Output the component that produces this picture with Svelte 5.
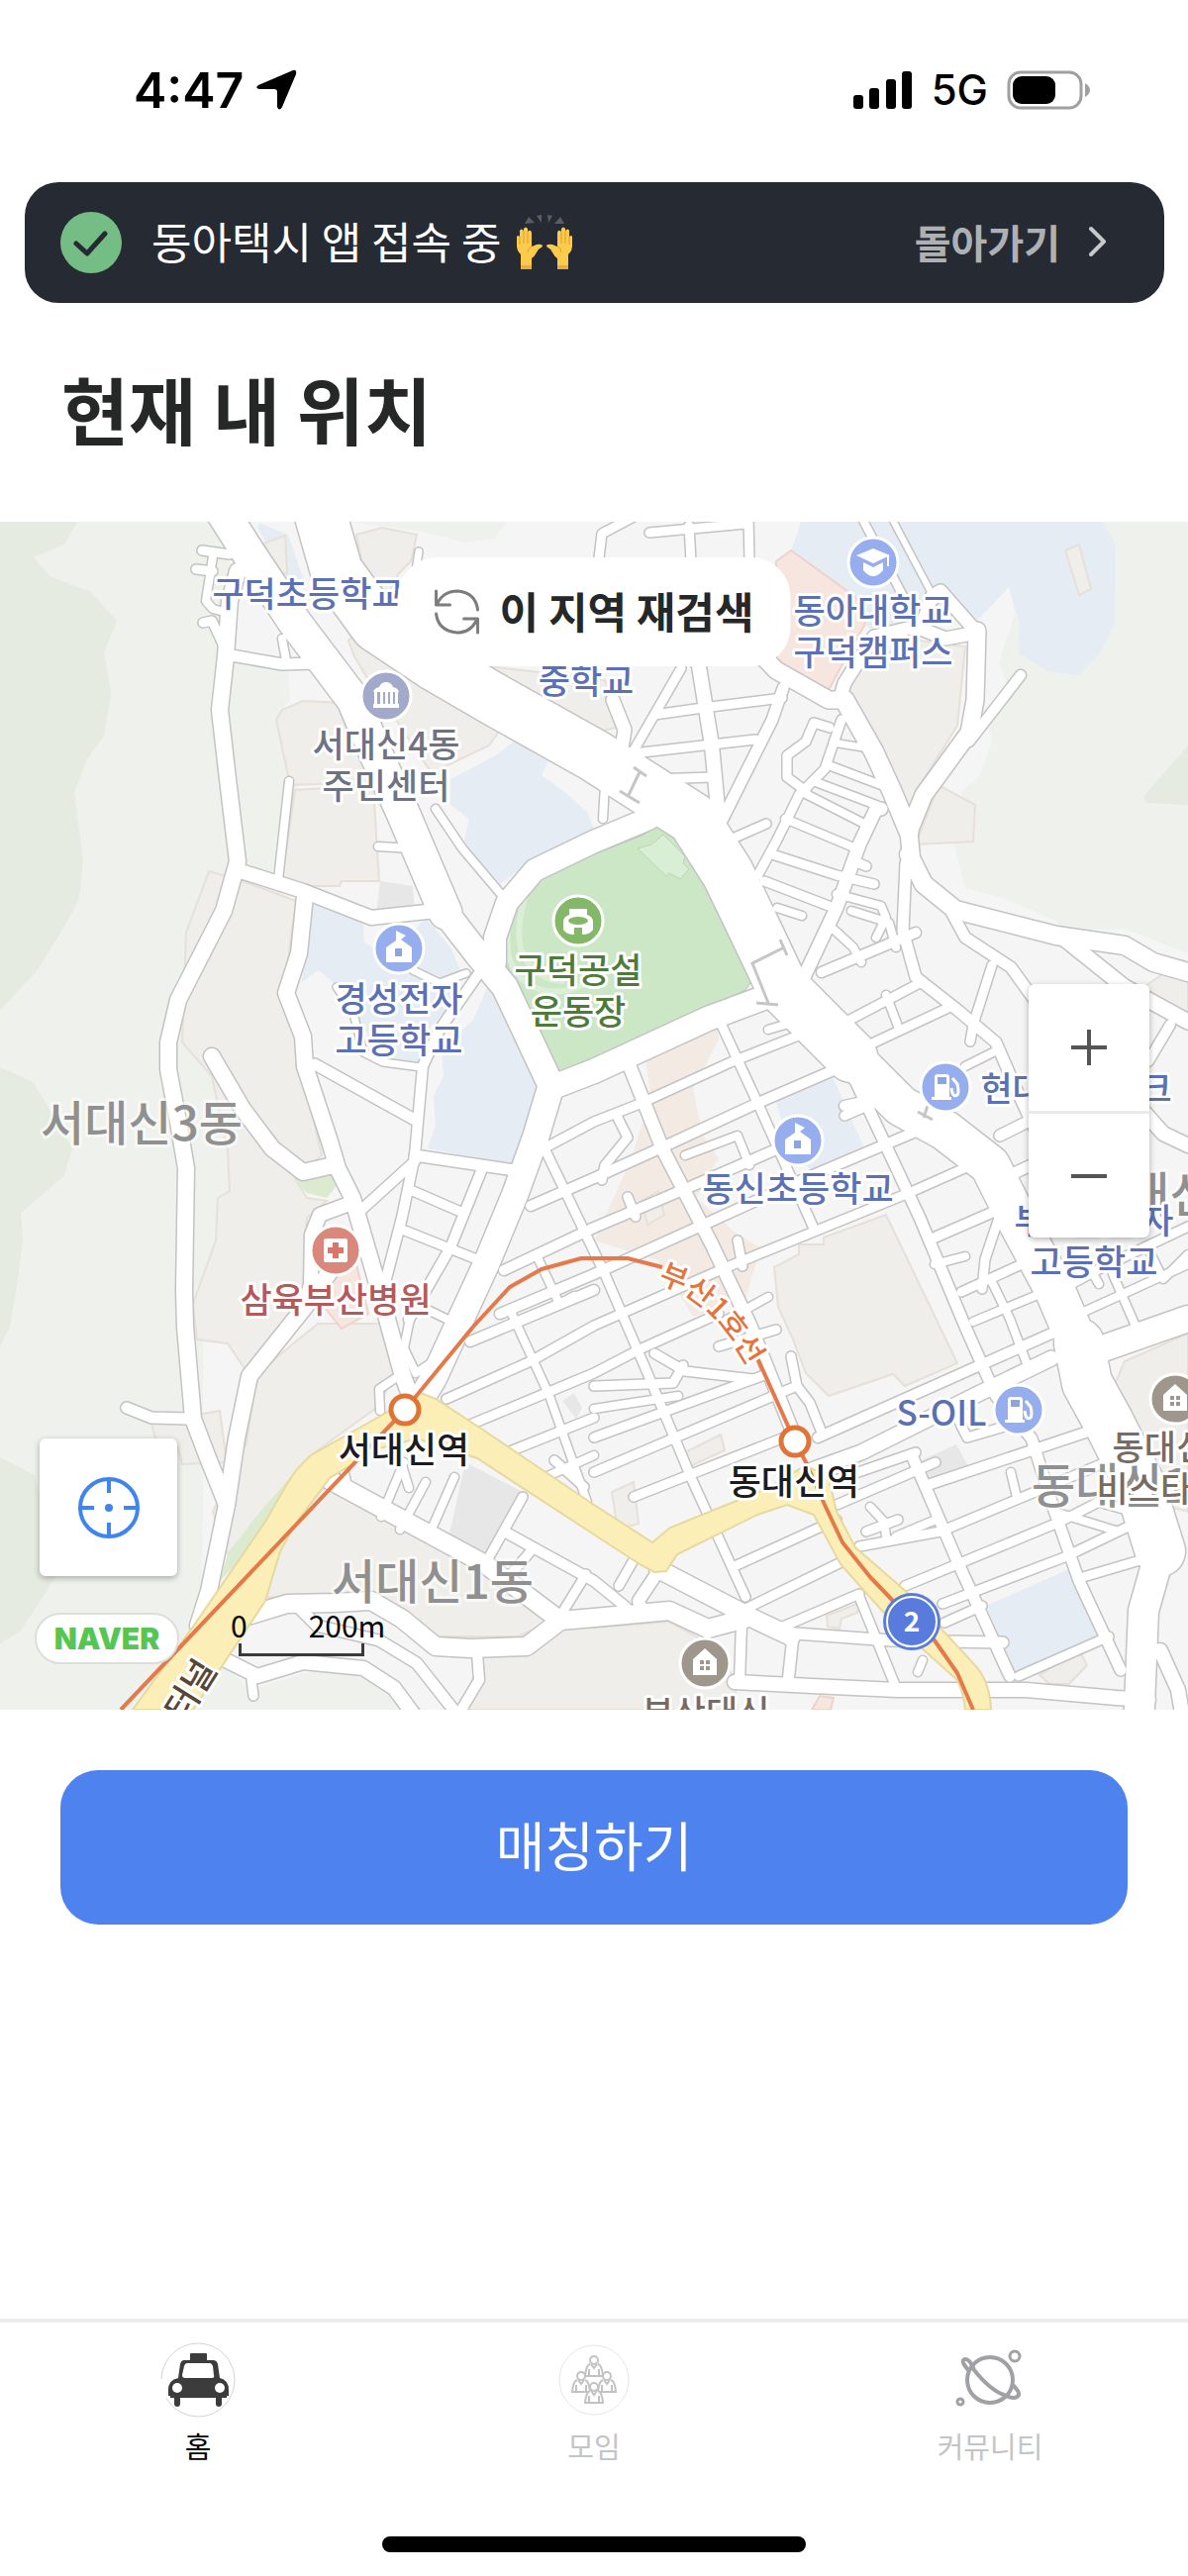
<script lang="ts">
  type Kind = "school" | "univ" | "gas" | "office" | "stadium" | "hospital" | "apartment";

  interface Label {
    x: number;
    y: number;
    lines: string[];
    tone: string;
  }

  interface Pin {
    x: number;
    y: number;
    kind: Kind;
  }

  // Closed areas under the roads: [class, points]
  const areas: [string, string][] = [
    ["hill", "0,0 212,0 240,60 228,130 290,140 293,180 280,195 300,268 290,380 240,360 211,353 188,415 205,420 184,526 214,560 230,636 232,676 220,683 218,726 195,790 205,830 205,1000 203,1110 250,1180 320,1160 370,1165 415,1200 0,1200"],
    ["hill", "1113,0 1200,0 1200,436 1136,411 1071,413 1067,403 1013,380 975,370 964,326 971,273 990,256 1002,223 998,193 1017,163 1009,143 1025,93 1021,66"],
    ["hill", "352,0 512,0 500,17 470,21 425,10"],
    ["forest", "0,0 78,0 65,23 34,36 50,55 92,71 118,100 105,133 112,173 105,216 88,240 75,273 84,343 80,380 70,400 38,453 0,493"],
    ["forest", "0,551 33,566 46,586 73,633 65,660 21,698 23,723 19,760 10,813 0,833"],
    ["forest", "0,945 35,963 60,1060 21,1120 0,1133"],
    ["forest", "1200,226 1155,278 1158,284 1200,286"],
    ["block", "360,13 386,6 421,13 415,40 402,53 390,80 369,60"],
    ["block", "306,181 346,183 385,262 318,265 293,266 279,200 285,190"],
    ["block", "298,271 377,266 383,363 345,363 343,368 316,368 285,360"],
    ["block", "363,110 410,140 503,200 505,210 494,226 452,246 440,260 400,200 368,153 358,136 352,120"],
    ["block", "494,146 600,213 631,206 611,160"],
    ["block", "211,353 245,363 299,383 291,443 283,476 299,526 325,640 298,663 310,683 330,686 310,703 306,776 295,803 250,860 230,830 199,826 195,790 218,726 220,683 232,676 230,636 214,560 184,526 188,415"],
    ["block", "321,810 387,810 398,860 383,893 314,943 230,1043 215,1000 249,930 260,860"],
    ["block", "153,910 222,898 229,950 184,952 178,930 158,930"],
    ["block", "329,973 494,1056 559,1110 524,1126 440,1126 383,1093 268,1086 283,1040 298,1010"],
    ["block", "486,1143 559,1110 600,1117 676,1111 711,1130 741,1166 745,1200 467,1200"],
    ["block", "832,723 895,700 967,850 914,873 902,861 837,883 814,860 801,826 786,793 782,753 807,740 807,730 832,730"],
    ["block", "868,143 929,120 975,126 967,206 925,273 914,296 853,186"],
    ["block", "948,266 985,286 983,323 925,326"],
    ["block", "1200,820 1136,848 1122,880 1143,926 1174,993 1200,1000"],
    ["block", "1140,480 1185,450 1200,455 1200,500"],
    ["salmon", "652,541 724,508 726,523 700,573 710,620 726,643 703,683 745,720 768,733 753,786 700,803 665,746 600,726 638,643 657,580"],
    ["school", "809,0 1113,0 1127,23 1126,103 1113,130 1090,155 1059,151 1029,133 1030,103 1019,66 987,100 960,100 883,113 854,80 799,30"],
    ["school", "260,6 262,1 291,13 306,56 300,70 287,53"],
    ["school", "528,215 555,238 547,256 574,276 593,293 600,310 551,333 505,366 467,330 474,300 455,286 455,260 501,236"],
    ["school", "314,386 367,406 368,425 395,440 430,400 455,430 466,455 450,465 465,480 432,513 425,548 383,543 365,505 342,470 322,453 305,465"],
    ["school", "494,466 547,576 528,651 432,633 440,610 438,580 448,560 446,533 478,503"],
    ["school", "784,586 841,561 874,635 822,656 800,640"],
    ["school", "996,1095 1080,1058 1113,1123 1025,1162"],
    ["hospital", "784,40 799,29 864,76 874,103 853,140 837,170 784,143"],
    ["hospital", "325,755 360,750 372,800 345,815 325,790"],
    ["hospital", "820,1200 828,1186 842,1188 839,1200"],
    ["lawn", "298,665 337,655 339,672 330,683 310,678"],
    ["lawn", "222,1070 230,1043 260,1003 291,968 318,943 314,960 270,1020"],
    ["built", "384,363 417,368 419,394 380,396"],
    ["built", "470,950 528,980 498,1048 450,1040"],
    ["built", "926,950 966,932 980,958 938,976"],
    ["built", "568,888 580,880 588,895 582,906"],
    ["block", "692,940 728,922 732,938 695,955"],
    ["block", "618,980 640,970 645,1012 624,1018"],
    ["block", "835,1105 868,1092 866,1102 850,1108 848,1118 836,1116"],
    ["block", "1050,1165 1090,1140 1098,1155 1080,1174 1060,1174"],
    ["block", "648,686 665,676 671,700 654,710"],
    ["block", "1076,29 1090,23 1102,68 1090,74"],
    ["block", "266,22 288,14 290,52 282,53"],
    ["park", "600,336 650,316 663,308 673,307 696,323 720,370 742,413 760,463 753,473 700,498 566,560 513,453 513,420 526,370 547,353"],
    ["parkBuilt", "644,330 658,326 670,316 692,338 690,345 696,351 687,361 676,355 673,358"],
  ];

  // Centre lines: [width, points]
  const roads: [number, string][] = [
    [52, "320,-20 340,50 380,105 440,145 500,180 600,236 700,300 735,355 764,415 790,470 860,540"],
    [40, "850,530 910,590 955,615 1000,650 1030,710 1065,775 1095,845"],
    [50, "1090,830 1098,870 1120,910 1150,970 1172,1040"],
    [30, "1172,1040 1155,1100 1150,1220"],
    [14, "1172,1140 1190,1180 1195,1210"],
    [26, "1100,840 1200,805"],
    [33, "215,-25 250,30 298,102 357,180 380,235 407,294 450,395"],
    [26, "450,395 485,440 510,470 556,568"],
    [22, "500,445 500,420 512,385 540,352 600,323 655,300"],
    [24, "556,572 600,555 715,502 790,474"],
    [26, "556,572 541,622 520,680 491,750 438,865 420,895"],
    [16, "240,50 232,80 228,136 222,190 230,260 240,343 226,393 180,483 170,526 170,553 180,606 188,653 186,776 187,813 195,906 209,943 229,993"],
    [16, "335,755 308,793 252,863 239,926 229,993 211,1080 200,1115"],
    [14, "240,352 306,373 375,400 440,393"],
    [16, "308,378 302,436 289,476 306,520 308,550 333,626 341,653 356,683 383,776 406,860 415,885"],
    [16, "214,540 245,593 275,633 306,657 337,650"],
    [14, "350,690 323,700 315,720 314,770 308,793"],
    [11, "318,548 417,603"],
    [10, "486,453 444,513 427,550 419,640 406,703 387,776 402,850"],
    [11, "419,640 526,656"],
    [10, "419,646 365,695"],
    [10, "486,656 455,733 413,806"],
    [9, "417,676 463,696"],
    [9, "409,716 494,750"],
    [7, "417,453 444,466 471,456"],
    [7, "340,470 356,493 367,536 387,546 425,551"],
    [8, "432,796 467,813"],
    [8, "415,800 408,835 420,860 435,850 465,800"],
    [8, "404,862 383,876 384,898"],
    [11, "128,895 153,905 191,906"],
    [8, "292,262 281,362"],
    [8, "382,328 415,330"],
    [8, "440,290 467,330 505,375"],
    [9, "204,29 232,33"],
    [9, "198,48 215,50"],
    [8, "215,35 208,80 215,88 230,92"],
    [9, "205,102 214,100 228,130"],
    [11, "234,135 285,144 318,143"],
    [8, "285,118 289,140"],
    [7, "423,30 420,50"],
    [9, "555,630 600,606 646,588 738,546 814,516"],
    [10, "536,691 600,663 673,630 768,586 849,551"],
    [10, "509,756 600,713 692,674 784,634"],
    [10, "505,800 600,760 715,708 814,663 944,608"],
    [10, "475,828 600,776"],
    [9, "451,886 536,848 600,812 734,753 918,678 990,646"],
    [9, "475,912 600,860 646,836 726,800"],
    [9, "500,945 600,905"],
    [8, "551,965 600,943"],
    [9, "661,840 692,858 761,866"],
    [9, "600,873 680,870 690,852"],
    [8, "600,896 685,883"],
    [9, "600,925 772,862"],
    [9, "600,960 800,875"],
    [9, "640,985 792,925"],
    [8, "692,640 745,620 757,650"],
    [13, "634,545 669,633 719,730 757,810 807,935"],
    [9, "725,500 768,593 823,716"],
    [9, "550,633 611,760 654,860 700,970 753,1086"],
    [8, "543,743 565,790 580,782"],
    [8, "517,800 555,883 593,990"],
    [9, "560,948 590,975"],
    [11, "860,556 890,620 929,703 975,813 1006,883 1042,926 1063,993 1090,1070 1132,1160"],
    [11, "921,943 967,1050 1020,1166"],
    [9, "868,1086 906,1180"],
    [9, "623,600 634,622 611,650 608,665"],
    [9, "634,682 642,702"],
    [9, "745,726 750,752"],
    [8, "734,806 776,783"],
    [8, "776,513 803,505"],
    [9, "726,833 784,816"],
    [9, "799,843 805,873 818,890 830,920"],
    [15, "820,958 870,940 990,880 1062,845"],
    [10, "826,925 990,852 1080,812"],
    [10, "853,590 898,580"],
    [9, "853,600 900,580"],
    [10, "830,455 925,415"],
    [9, "833,500 849,508 929,466"],
    [9, "883,526 960,490"],
    [8, "895,478 908,512"],
    [9, "1002,448 983,508 980,525"],
    [8, "975,550 1009,533"],
    [10, "944,723 1006,696"],
    [9, "1010,700 995,745 992,775"],
    [9, "971,778 1032,750"],
    [8, "983,808 1060,776"],
    [8, "1003,770 1020,805 1040,858"],
    [8, "944,750 975,742"],
    [8, "1097,797 1200,750"],
    [9, "1067,778 1110,755 1200,712"],
    [8, "1124,760 1146,810"],
    [8, "1090,735 1110,770"],
    [8, "1160,735 1175,765 1200,740"],
    [10, "1182,508 1160,545"],
    [14, "1150,590 1175,618 1200,630"],
    [11, "1010,620 1080,585"],
    [11, "1020,660 1080,632"],
    [18, "918,336 933,366 965,392 1067,418 1136,428 1165,445 1200,455"],
    [11, "956,385 975,420 1021,450 1050,490"],
    [15, "1071,418 1136,470 1200,505"],
    [17, "987,110 985,180 979,213 933,276 918,313 921,345"],
    [10, "1031,155 979,222"],
    [13, "933,100 941,76 950,70 987,112 955,118 925,106 883,116 853,163 848,180"],
    [8, "870,-5 920,90"],
    [6, "900,-5 945,80"],
    [19, "853,180 883,233 900,270 918,313"],
    [17, "750,115 784,150 837,180 853,180"],
    [9, "850,200 833,250 807,276 793,305 784,323 765,358"],
    [9, "838,208 822,203 814,222 795,236 795,258 814,272"],
    [13, "890,290 885,290 868,326 845,390 812,460"],
    [7, "841,223 872,228"],
    [8, "837,246 890,266"],
    [8, "824,263 885,286"],
    [8, "814,275 873,305"],
    [8, "793,300 860,328"],
    [9, "780,336 845,357 883,366"],
    [9, "772,363 837,388"],
    [9, "868,345 875,348"],
    [8, "845,376 890,388 895,400 885,420"],
    [8, "785,390 810,398"],
    [14, "705,140 719,226 726,300"],
    [9, "688,148 635,240"],
    [9, "661,195 710,188 790,178"],
    [9, "640,234 763,220"],
    [9, "660,260 719,258"],
    [11, "791,168 780,200 730,300"],
    [13, "619,180 631,210 627,235"],
    [9, "656,11 753,2"],
    [9, "696,4 698,40"],
    [9, "756,-5 757,40"],
    [9, "640,-5 608,12 604,45"],
    [8, "611,266 609,300"],
    [9, "740,320 774,305"],
    [11, "915,345 912,413 925,460 967,493 1006,526 1025,570 1051,626"],
    [8, "838,408 862,430 870,445"],
    [8, "860,393 898,405 905,430"],
    [18, "333,968 490,1053 566,1110"],
    [18, "250,1105 290,1093 337,1092 375,1090 406,1108 440,1136 475,1138 532,1136 566,1110 600,1107 676,1100 715,1118 753,1108"],
    [14, "228,1150 260,1166 306,1152 367,1158 398,1178 418,1205"],
    [9, "254,1170 256,1186"],
    [11, "300,1095 320,1115 383,1130 421,1153 462,1205"],
    [10, "482,1143 484,1170 463,1205"],
    [9, "528,985 490,1053"],
    [10, "513,1022 600,1070 632,1096"],
    [9, "536,1040 510,1070"],
    [9, "592,1063 563,1110"],
    [8, "345,945 352,980"],
    [8, "408,950 385,1005"],
    [8, "430,970 404,1018"],
    [8, "459,965 438,1013"],
    [8, "405,950 413,976"],
    [12, "665,1060 645,1090 650,1105"],
    [9, "645,1040 625,1075"],
    [18, "665,1058 765,1110 799,1126"],
    [11, "790,1122 900,1130 1013,1132"],
    [14, "742,1172 820,1176 906,1180 1036,1180 1128,1188 1160,1190"],
    [10, "749,1113 747,1172"],
    [11, "801,1126 796,1172"],
    [9, "742,1055 845,1008"],
    [9, "753,1098 862,1045"],
    [9, "791,1116 868,1083"],
    [9, "875,1020 907,1008"],
    [9, "868,1035 950,1020 1117,950"],
    [9, "914,1075 1071,1010 1110,990 1145,1000"],
    [9, "952,1093 1075,1046 1150,1010"],
    [9, "954,1112 992,1095"],
    [9, "1094,1066 1165,1045"],
    [9, "1029,1166 1120,1126"],
    [10, "937,973 1117,913"],
    [9, "838,970 925,940"],
    [9, "845,993 945,950"],
    [8, "879,995 893,1010 895,1025"],
    [8, "905,1025 945,1008"],
    [8, "927,1162 932,1150"],
    [8, "1021,960 1027,985"],
    [9, "967,905 977,925 1045,905"],
    [8, "1045,935 1065,1000 1130,1020"],
  ];

  const pins: Pin[] = [
    { x: 390, y: 176, kind: "office" },
    { x: 882, y: 41, kind: "univ" },
    { x: 403, y: 431, kind: "school" },
    { x: 584, y: 403, kind: "stadium" },
    { x: 955, y: 571, kind: "gas" },
    { x: 806, y: 625, kind: "school" },
    { x: 339, y: 736, kind: "hospital" },
    { x: 1029, y: 897, kind: "gas" },
    { x: 1187, y: 886, kind: "apartment" },
    { x: 712, y: 1153, kind: "apartment" },
  ];

  const districts: Label[] = [
    { x: 143, y: 625, lines: ["서대신3동"], tone: "district" },
    { x: 437, y: 1088, lines: ["서대신1동"], tone: "district" },
    { x: 1195, y: 697, lines: ["동대신2동"], tone: "district" },
    { x: 1144, y: 991, lines: ["동대신1동"], tone: "district" },
  ];

  const labels: Label[] = [
    { x: 311, y: 86, lines: ["구덕초등학교"], tone: "blue" },
    { x: 592, y: 174, lines: ["중학교"], tone: "blue" },
    { x: 390, y: 238, lines: ["서대신4동", "주민센터"], tone: "slate" },
    { x: 882, y: 103, lines: ["동아대학교", "구덕캠퍼스"], tone: "blue" },
    { x: 403, y: 495, lines: ["경성전자", "고등학교"], tone: "blue" },
    { x: 584, y: 466, lines: ["구덕공설", "운동장"], tone: "green" },
    { x: 1087, y: 586, lines: ["현대오일뱅크"], tone: "blue" },
    { x: 806, y: 687, lines: ["동신초등학교"], tone: "blue" },
    { x: 1105, y: 719, lines: ["부산서여자", "고등학교"], tone: "blue" },
    { x: 339, y: 799, lines: ["삼육부산병원"], tone: "red" },
    { x: 951, y: 913, lines: ["S-OIL"], tone: "blue" },
    { x: 1188, y: 948, lines: ["동대신브", "비스타동원"], tone: "brown" },
    { x: 713, y: 1216, lines: ["부산대신"], tone: "brown" },
    { x: 408, y: 951, lines: ["서대신역"], tone: "station" },
    { x: 802, y: 983, lines: ["동대신역"], tone: "station" },
  ];

  const tabs = ["홈", "모임", "커뮤니티"];
  let active = $state("홈");
</script>

<div class="screen">
  <header class="status">
    <div class="clock">
      <span>4:47</span>
      <svg width="42" height="42" viewBox="0 0 42 42" aria-hidden="true">
        <path d="M38 1Q42 0 41 5L27 38Q24 43 22 38V23Q22 20 19 20H4Q-1 19 3 16Z" />
      </svg>
    </div>
    <div class="signal">
      <svg width="60" height="40" viewBox="0 0 60 40" aria-hidden="true">
        <rect x="0" y="25" width="10" height="14" rx="3" />
        <rect x="16" y="18" width="10" height="21" rx="3" />
        <rect x="33" y="9" width="10" height="30" rx="3" />
        <rect x="49" y="1" width="10" height="38" rx="3" />
      </svg>
      <span>5G</span>
      <svg width="84" height="40" viewBox="0 0 84 40" aria-hidden="true">
        <rect x="2" y="2" width="73" height="36" rx="12" fill="none" stroke="#a0a0a0" stroke-width="3" />
        <rect x="6" y="6" width="43" height="28" rx="9" />
        <path d="M79 13Q84 16 84 20T79 27Z" fill="#a0a0a0" />
      </svg>
    </div>
  </header>

  <section class="banner">
    <svg width="62" height="62" viewBox="0 0 62 62" aria-hidden="true">
      <circle cx="31" cy="31" r="31" fill="#74bd84" />
      <path d="M16 32l11 10 18-20" fill="none" stroke="#262a32" stroke-width="5" stroke-linecap="round" stroke-linejoin="round" />
    </svg>
    <p>동아택시 앱 접속 중</p>
    <svg class="hands" width="60" height="56" viewBox="0 0 60 56" role="img" aria-label="만세">
      <g fill="#5b5d62">
        <path d="M14 2l6 6-10 1zM22 1l5-1v8zM33 0l5 1-4 7zM46 2l4 7h-10z" />
      </g>
      {#each ["", "translate(60 0) scale(-1 1)"] as flip}
        <g transform={flip}>
          <path d="M6 55V40Q2 36 2 32V22Q3 20 5 22V16Q6 13 9 16V14Q11 11 13 14V17Q16 14 17 18V32Q20 31 22 30Q28 29 28 32Q24 34 22 38Q20 42 17 44V55Z" fill="#fccb4b" />
          <path d="M5 22V30M9 16V29M13 17V29" stroke="#dc9d33" fill="none" />
          <path d="M17 32Q13 33 13 38" stroke="#e0a437" fill="none" />
          <path d="M6 51H17V55H6Z" fill="#e9ad3d" />
        </g>
      {/each}
    </svg>
    <button class="back">
      돌아가기
      <svg width="18" height="32" viewBox="0 0 18 32" aria-hidden="true">
        <path d="M2 3l13 13L2 29" fill="none" stroke="#c6c8ca" stroke-width="4" stroke-linecap="round" stroke-linejoin="round" />
      </svg>
    </button>
  </section>

  <h1>현재 내 위치</h1>

  <section class="map">
    <svg class="tiles" viewBox="0 0 1200 1200" role="img" aria-label="서대신동 지도">
      <defs>
        <symbol id="school" viewBox="-26 -26 52 52">
          <path d="M-13 14V-1L-3 -8V-18L7 -13L2 -9L13 -1V14Z" />
          <rect class="hole" x="-4" y="0" width="7" height="8" />
        </symbol>
        <symbol id="univ" viewBox="-26 -26 52 52">
          <path d="M0 -14L17 -7L0 1L-17 -7ZM-10 0L0 5L10 0V8Q5 14 0 14T-10 8Z" />
          <path d="M15 -7V4" stroke="#fff" stroke-width="2" />
        </symbol>
        <symbol id="gas" viewBox="-26 -26 52 52">
          <path d="M-11 12V-10Q-11 -13 -8 -13H1Q4 -13 4 -10V12ZM-14 10H6V13H-14Z" />
          <rect class="hole" x="-8" y="-10" width="9" height="7" />
          <path d="M6 1Q7 11 12 8Q14 5 12 -3L7 -9" fill="none" stroke="#fff" stroke-width="3" />
        </symbol>
        <symbol id="office" viewBox="-26 -26 52 52">
          <path d="M-13 -4Q-12 -8 -7 -9Q-5 -14 0 -14T7 -9Q12 -8 13 -4ZM-12 -4h3V9h-3zM-6 -4h3V9h-3zM-1 -4h3V9h-3zM4 -4h3V9h-3zM9 -4h3V9h-3zM-13 8H13V12H-13Z" />
        </symbol>
        <symbol id="stadium" viewBox="-26 -26 52 52">
          <path d="M-9 -12H9V-6Q15 -4 15 1V9Q12 14 4 14V7H-4V14Q-12 14 -15 9V1Q-15 -4 -9 -6Z" />
          <ellipse class="hole" cx="0" cy="0" rx="10" ry="4" />
        </symbol>
        <symbol id="hospital" viewBox="-26 -26 52 52">
          <rect x="-12" y="-12" width="24" height="24" rx="2" />
          <path class="hole" d="M-3 -8H3V-3H8V3H3V8H-3V3H-8V-3H-3Z" />
        </symbol>
        <symbol id="apartment" viewBox="-26 -26 52 52">
          <path d="M-12 12V-4L0 -15L12 -4V12Z" />
          <path class="hole" d="M-5 -3h4v4h-4zM1 -3h4v4h-4zM-5 3h4v4h-4zM1 3h4v4h-4z" />
        </symbol>
        <path id="line-name" d="M664 769Q718 782 760 862" />
      </defs>

      <rect width="1200" height="1200" fill="#f5f5f5" />
      {#each areas as [kind, points]}
        <polygon class={kind} {points} />
      {/each}
      <path class="track" d="M526 376Q508 400 514 440Q528 478 568 474Q600 470 612 440M536 365Q520 400 526 432Q540 464 570 464" />

      {#each roads as [width, points]}
        <polyline class="casing" {points} stroke-width={width + 3} />
      {/each}
      {#each roads as [width, points]}
        <polyline class="road" {points} stroke-width={width} />
      {/each}

      <g class="crossing">
        <path d="M640 248L653 257M646 253L635 276M626 272L646 284" />
        <path d="M788 422L795 438M792 430L760 446L776 486M764 486L786 488" />
        <path d="M927 596L942 604M937 590L933 602" />
      </g>

      <path class="highway" d="M134 1200L195 1116L268 1010L291 970Q300 955 314 943L390 900L425 880L440 886L486 916L600 993L659 1031L677 1016L734 993L772 978L814 953L837 966L845 1000L864 1036L918 1083L983 1153Q1000 1170 1001 1200H975Q974 1185 967 1170L929 1136L891 1100L849 1053L822 1003L795 993L765 1003L684 1043L673 1060L661 1061L646 1053L600 1023L482 946L421 926L383 936L333 966L298 1013L283 1040L268 1090L195 1200Z" />
      <path class="subway" d="M122 1200L409 897L478 813L515 773L547 755L587 744H634L669 753M763 840L803 929L814 950L833 993L851 1031L879 1066L902 1090L944 1130L967 1163L983 1200" />
      <text class="line-name"><textPath href="#line-name">부산1호선</textPath></text>

      {#each districts as label}
        <text class={label.tone} x={label.x} y={label.y}>{label.lines[0]}</text>
      {/each}

      {#each pins as pin}
        <g class="pin {pin.kind}-pin">
          <circle cx={pin.x} cy={pin.y} r="25" />
          <use href="#{pin.kind}" x={pin.x - 26} y={pin.y - 26} width="52" height="52" />
        </g>
      {/each}

      {#each labels as label}
        <text class="poi {label.tone}" y={label.y}>
          {#each label.lines as line, i}
            <tspan x={label.x} y={label.y + i * 42}>{line}</tspan>
          {/each}
        </text>
      {/each}

      <circle class="stop" cx="409" cy="897" r="14" />
      <circle class="stop" cx="803" cy="929" r="14" />

      <circle cx="921" cy="1111" r="29" fill="#587bdc" />
      <circle cx="921" cy="1111" r="25" fill="none" stroke="#fff" stroke-width="2" />
      <text class="route" x="921" y="1121">2</text>
      <text class="tunnel" transform="translate(186 1214) rotate(-58)">터널</text>
    </svg>

    <button class="refresh">
      <svg width="46" height="46" viewBox="0 0 46 46" aria-hidden="true">
        <path d="M2 2V16H16M3 15Q9 2 24 2Q42 4 44 21M44 44V30H30M43 31Q37 44 23 44Q4 42 2 25" fill="none" stroke="#7d7d7d" stroke-width="3" stroke-linecap="round" stroke-linejoin="round" />
      </svg>
      <span>이 지역 재검색</span>
    </button>

    <div class="zoom">
      <button aria-label="확대">
        <svg width="38" height="38" viewBox="0 0 38 38"><path d="M19 1V37M1 19H37" /></svg>
      </button>
      <button aria-label="축소">
        <svg width="38" height="38" viewBox="0 0 38 38"><path d="M1 19H37" /></svg>
      </button>
    </div>

    <div class="corner">
      <button class="locate" aria-label="내 위치">
        <svg width="64" height="64" viewBox="0 0 64 64">
          <path d="M32 4V17M32 47V60M4 32H17M47 32H60" />
          <circle cx="32" cy="32" r="29" />
          <circle class="dot" cx="32" cy="32" r="4" />
        </svg>
      </button>
      <div class="legend">
        <a class="naver" href="#naver">NAVER</a>
        <div class="scale">
          <div class="marks"><span>0</span><span>200m</span></div>
          <div class="ruler"></div>
        </div>
      </div>
    </div>
  </section>

  <button class="match">매칭하기</button>

  <nav>
    {#each tabs as tab, i}
      <button class:active={active === tab} onclick={() => (active = tab)}>
        <svg width="76" height="76" viewBox="0 0 76 76" aria-hidden="true">
          {#if i === 0}
            <circle cx="38" cy="38" r="37" fill="none" stroke="#d4d4d4" stroke-dasharray="97 20 200" />
            <g fill="#3c3c3c">
              <rect x="30" y="11" width="17" height="8" rx="1" />
              <path fill-rule="evenodd" d="M24 18H53Q57 18 58 22L60 36Q69 38 69 48V54H8V48Q8 38 18 36L20 22Q21 18 24 18ZM27 21Q25 21 24 24L22 33Q22 36 25 36H52Q55 36 54 33L53 24Q52 21 50 21Z" />
              <path d="M10 52H67V56H10Z" />
              <rect x="14" y="50" width="6" height="15" rx="3" />
              <rect x="56" y="50" width="6" height="15" rx="3" />
            </g>
            <circle cx="17" cy="46" r="5" fill="#fff" />
            <circle cx="60" cy="46" r="5" fill="#fff" />
          {:else if i === 1}
            <circle cx="38" cy="38" r="35" fill="none" stroke="#e6e6e6" />
            <g fill="#fff" stroke="#c2c2c2" stroke-width="2">
              {#each [[38, 18], [25, 34], [51, 34], [38, 45]] as [x, y]}
                <path d="M{x - 4} {y + 4}Q{x - 8} {y + 5} {x - 9} {y + 16}H{x + 9}Q{x + 8} {y + 5} {x + 4} {y + 4}M{x - 5} {y + 9}V{y + 16}M{x + 5} {y + 9}V{y + 16}M{x - 3} {y + 4}L{x} {y + 8}L{x + 3} {y + 4}" />
                <circle cx={x} cy={y} r="4" />
              {/each}
            </g>
          {:else}
            <g fill="none" stroke="#a0a1a5" stroke-width="4">
              <circle cx="38" cy="38" r="23" />
              <path d="M17 29Q7 18 13 17Q18 17 22 28Q38 48 52 53Q64 59 67 53Q68 50 61 43" />
              <circle cx="63" cy="14" r="5" stroke-width="3" />
              <circle cx="8" cy="60" r="3" stroke-width="3" />
            </g>
          {/if}
        </svg>
        {tab}
      </button>
    {/each}
  </nav>
  <div class="home-bar"></div>
</div>

<style>
  :global(body) {
    margin: 0;
    background: #fff;
  }

  .screen {
    display: flex;
    flex-direction: column;
    min-height: 100vh;
    background: #fff;
    color: #262727;
    font-family: "Noto Sans CJK KR", sans-serif;
  }

  button {
    padding: 0;
    border: 0;
    background: none;
    color: inherit;
    font-family: inherit;
    cursor: pointer;
  }

  p,
  h1 {
    margin: 0;
  }

  svg {
    display: block;
    flex: none;
  }

  .status {
    display: flex;
    justify-content: space-between;
    padding: 61px 99px 0 135px;
    color: #000;
    font-family: Inter, sans-serif;
    line-height: 60px;
  }

  .clock,
  .signal {
    display: flex;
    align-items: center;
    gap: 12px;
  }

  .clock {
    font-size: 50px;
    font-weight: 600;
  }

  .signal {
    gap: 19px;
    font-size: 42px;
    font-weight: 500;
  }

  .banner {
    display: flex;
    align-items: center;
    height: 122px;
    margin: 63px 24px 0 25px;
    padding: 0 58px 0 36px;
    border-radius: 34px;
    background: #262a32;
    color: #fff;
    font-size: 44px;
  }

  .banner p {
    margin-left: 30px;
    padding-bottom: 4px;
  }

  .hands {
    margin-left: 14px;
  }

  .back {
    display: flex;
    align-items: center;
    gap: 29px;
    margin-left: auto;
    padding-bottom: 2px;
    color: #aeb1b4;
    font-size: 40px;
    font-weight: 700;
  }

  h1 {
    padding: 50px 62px 59px;
    font-size: 74px;
    font-weight: 700;
    line-height: 112px;
  }

  .map {
    position: relative;
    overflow: hidden;
    background: #f5f5f5;
  }

  .tiles {
    width: 100%;
    height: auto;
  }

  .hill {
    fill: #eef1ec;
  }

  .forest {
    fill: #e5ebe1;
  }

  .block {
    fill: #efeeeb;
    stroke: #e6e0d8;
    stroke-width: 2;
  }

  .salmon {
    fill: #f3eae4;
  }

  .school {
    fill: #e5ecf4;
  }

  .hospital {
    fill: #f7e5e0;
    stroke: #eed3cd;
    stroke-width: 2;
  }

  .lawn {
    fill: #dcead0;
  }

  .built {
    fill: #e7e7e7;
  }

  .park {
    fill: #cce7c5;
    stroke: #bcbcbc;
    stroke-width: 1;
  }

  .parkBuilt {
    fill: #d8efd5;
    stroke: #b7d7b1;
  }

  .track {
    fill: none;
    stroke: #dbeed6;
    stroke-width: 6;
  }

  .casing,
  .road {
    fill: none;
    stroke: #c3c3c3;
    stroke-linecap: round;
    stroke-linejoin: round;
  }

  .road {
    stroke: #fff;
  }

  .crossing {
    fill: none;
    stroke: #c8c6c4;
    stroke-width: 3;
  }

  .highway {
    fill: #fbefb7;
    stroke: #e6d99f;
    stroke-width: 2;
  }

  .subway {
    fill: none;
    stroke: #e4794a;
    stroke-width: 4;
    stroke-linejoin: round;
  }

  .stop {
    fill: #fff;
    stroke: #df7436;
    stroke-width: 5;
  }

  text {
    fill: #222;
    stroke: #fff;
    stroke-width: 6px;
    stroke-linejoin: round;
    paint-order: stroke;
    font-size: 35px;
    font-weight: 500;
    text-anchor: middle;
  }

  text.district {
    fill: #909090;
    stroke-opacity: 0.6;
    font-size: 48px;
    font-weight: 500;
  }

  .poi.blue {
    fill: #5b71b3;
  }

  .poi.slate {
    fill: #6f7283;
  }

  .poi.green {
    fill: #4f7b3a;
  }

  .poi.red {
    fill: #b45a5a;
  }

  .poi.brown {
    fill: #796b62;
  }

  .poi.station {
    fill: #1c1c1c;
    font-size: 36px;
  }

  .line-name {
    fill: #e4743c;
    font-size: 30px;
    text-anchor: start;
  }

  .tunnel {
    fill: #584637;
    text-anchor: start;
  }

  .route {
    fill: #fff;
    stroke: none;
    font-size: 28px;
    font-weight: 700;
  }

  .pin circle {
    stroke: #fff;
    stroke-width: 3;
  }

  .pin use {
    fill: #fff;
  }

  .hole {
    fill: #8da4dc;
  }

  .school-pin,
  .univ-pin,
  .gas-pin {
    fill: #96aeed;
  }

  .office-pin {
    fill: #a1aacb;
  }

  .stadium-pin {
    fill: #83b868;
  }

  .hospital-pin {
    fill: #d9887b;
  }

  .apartment-pin {
    fill: #a0978c;
  }

  #stadium .hole {
    fill: #83b868;
  }

  #hospital .hole {
    fill: #d9776b;
  }

  #apartment .hole {
    fill: #a0978c;
  }

  .refresh {
    position: absolute;
    top: 36px;
    left: 50%;
    display: flex;
    align-items: center;
    gap: 20px;
    height: 110px;
    padding: 0 37px;
    transform: translateX(-50%);
    border-radius: 40px;
    background: #fff;
    color: #262727;
    font-size: 43px;
    font-weight: 700;
    white-space: nowrap;
  }

  .refresh span {
    padding-bottom: 4px;
  }

  .zoom {
    position: absolute;
    top: 467px;
    right: 39px;
    width: 122px;
    border-radius: 6px;
    background: #fff;
    box-shadow: 0 2px 6px #0000004d;
  }

  .zoom button {
    display: flex;
    align-items: center;
    justify-content: center;
    width: 100%;
    height: 128px;
  }

  .zoom button + button {
    border-top: 3px solid #ebebeb;
  }

  .zoom path {
    stroke: #555;
    stroke-width: 4;
  }

  .corner {
    position: absolute;
    bottom: 46px;
    left: 35px;
  }

  .locate {
    display: flex;
    align-items: center;
    justify-content: center;
    width: 139px;
    height: 139px;
    margin-left: 5px;
    border-radius: 6px;
    background: #fff;
    box-shadow: 0 2px 6px #0000004d;
  }

  .locate svg {
    fill: none;
    stroke: #3f85f0;
    stroke-width: 4;
  }

  .locate .dot {
    fill: #3f85f0;
    stroke: none;
  }

  .legend {
    display: flex;
    align-items: flex-end;
    gap: 60px;
    margin-top: 34px;
  }

  .naver {
    width: 142px;
    border: 2px solid #dcdedb;
    border-radius: 27px;
    background: #fff;
    color: #56c552;
    font-family: Inter, sans-serif;
    font-size: 30px;
    font-weight: 900;
    line-height: 48px;
    text-align: center;
    text-decoration: none;
  }

  .scale {
    margin-bottom: 8px;
    color: #000;
  }

  .marks {
    display: flex;
    gap: 62px;
    margin: 0 0 4px -8px;
    font-size: 30px;
    line-height: 30px;
  }

  .ruler {
    width: 121px;
    height: 10px;
    border: 3px solid #3a3a3a;
    border-top: 0;
  }

  .match {
    height: 156px;
    margin: 61px 61px 0;
    padding-bottom: 8px;
    border-radius: 38px;
    background: #4d82ef;
    color: #fff;
    font-size: 54px;
    font-weight: 400;
  }

  nav {
    display: flex;
    margin-top: auto;
    padding: 20px 0 70px;
    border-top: 4px solid #ebebeb;
  }

  nav button {
    display: flex;
    flex: 1;
    flex-direction: column;
    align-items: center;
    gap: 6px;
    color: #c3c4c7;
    font-size: 29px;
    line-height: 44px;
  }

  nav .active {
    color: #000;
  }

  .home-bar {
    width: 428px;
    height: 16px;
    margin: 0 auto 24px;
    border-radius: 8px;
    background: #000;
  }
</style>
